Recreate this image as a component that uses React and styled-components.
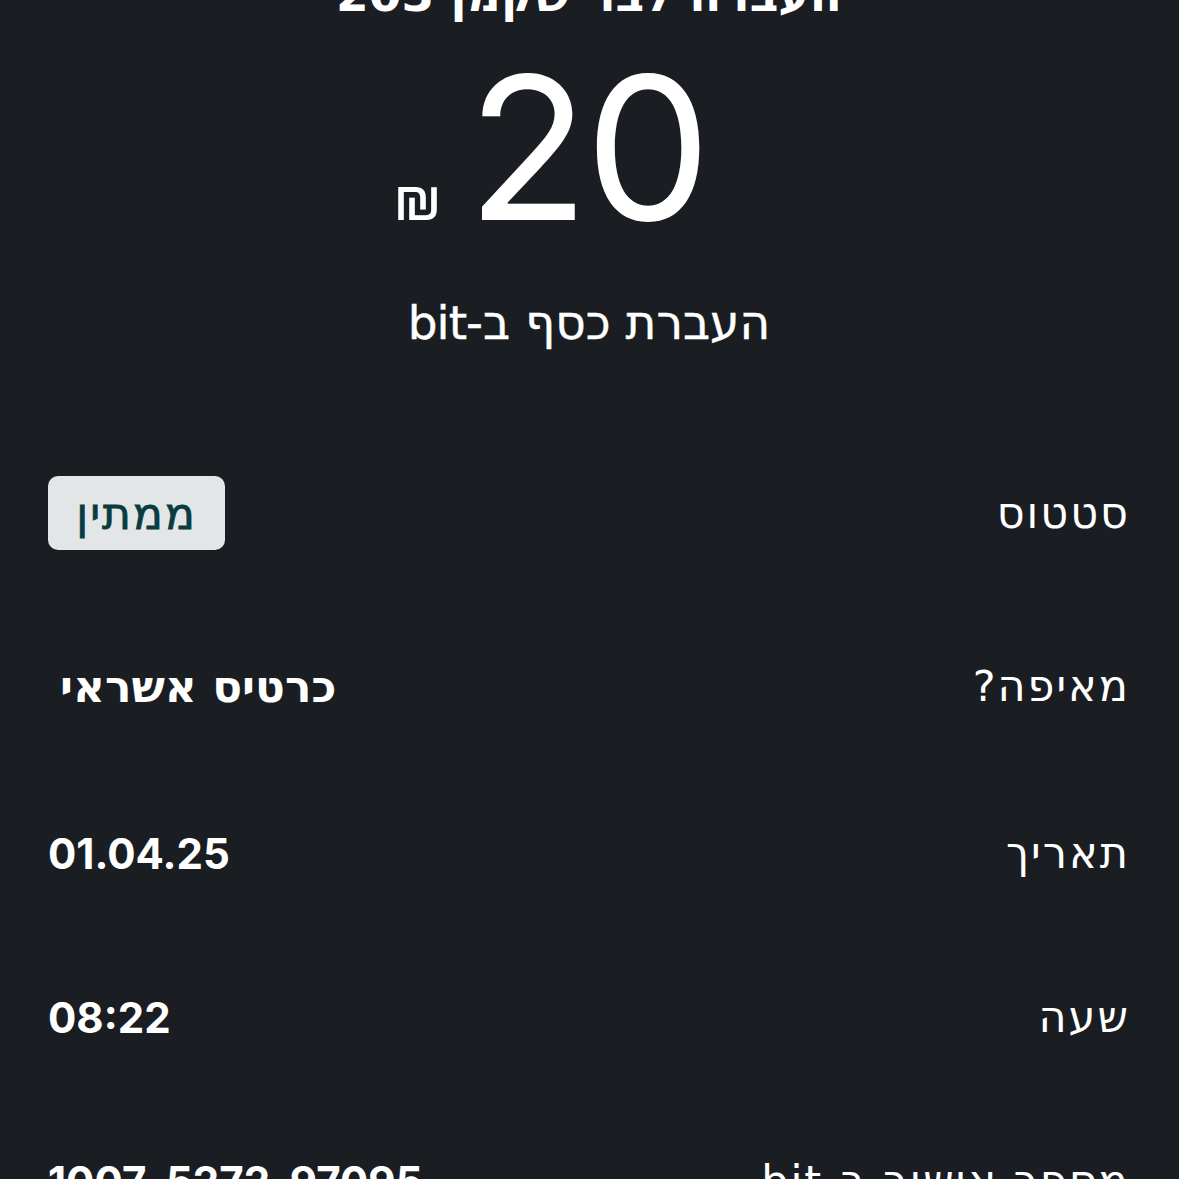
import React from "react";
import styled, { createGlobalStyle } from "styled-components";

const Global = createGlobalStyle`
  html, body { margin: 0; padding: 0; background: #1a1e22; }
  body { font-family: "DejaVu Sans", "Open Sans", sans-serif; color: #ffffff; }
`;

const Page = styled.div`
  direction: rtl;
  min-height: 1179px;
  background: #1a1e22;
  overflow: hidden;
  padding: 0 49px 0 48px;
  box-sizing: border-box;
`;

const Title = styled.h1`
  margin: -31px 0 0;
  text-align: center;
  font-size: 47px;
  font-weight: 700;
  line-height: 52px;
`;

const AmountRow = styled.div`
  direction: ltr;
  display: flex;
  justify-content: center;
  align-items: baseline;
  gap: 25px;
  margin-top: 26px;
  padding-right: 78px;
`;

const Shekel = styled.span`
  font-family: "Inter", "DejaVu Sans", sans-serif;
  font-size: 60px;
  font-weight: 400;
`;

const Amount = styled.span`
  font-family: "Inter", sans-serif;
  font-size: 200px;
  font-weight: 400;
  line-height: 200px;
  letter-spacing: -4px;
`;

const Subtitle = styled.div`
  text-align: center;
  font-size: 47px;
  margin-top: 46px;
  line-height: 60px;
  -webkit-text-stroke: 0.4px #ffffff;
`;

const Bit = styled.span`
  font-family: "DejaVu Sans", sans-serif;
  font-weight: 400;
  letter-spacing: -1px;
`;

const Rows = styled.div`
  display: flex;
  flex-direction: column;
  margin-top: 72px;
`;

const Row = styled.div`
  display: flex;
  justify-content: space-between;
  align-items: center;
  height: ${(p) => p.$h || 166}px;
`;

const Label = styled.span`
  font-size: 43px;
  letter-spacing: 2px;
  font-weight: 400;
`;

const Value = styled.span`
  font-family: ${(p) => (p.$num ? '"Inter", sans-serif' : '"DejaVu Sans", sans-serif')};
  font-size: ${(p) => (p.$num ? 42 : 44)}px;
  font-weight: 700;
  padding-left: ${(p) => p.$pl || 0}px;
`;

const Badge = styled.span`
  display: inline-flex;
  align-items: center;
  justify-content: center;
  width: 177px;
  height: 74px;
  border-radius: 10px;
  background: #e2e6e7;
  color: #0b3b3e;
  font-size: 44px;
  letter-spacing: 2px;
  font-weight: 400;
  -webkit-text-stroke: 0.8px #0b3b3e;
`;

export default function App() {
  return (
    <>
      <Global />
      <Page>
        <Title>העברה לבר שקמן 203</Title>
        <AmountRow>
          <Shekel>₪</Shekel>
          <Amount>20</Amount>
        </AmountRow>
        <Subtitle>
          העברת כסף ב-<Bit>bit</Bit>
        </Subtitle>
        <Rows>
          <Row $h={176}>
            <Label>סטטוס</Label>
            <Badge>ממתין</Badge>
          </Row>
          <Row $h={170}>
            <Label>מאיפה?</Label>
            <Value $pl={12}>כרטיס אשראי</Value>
          </Row>
          <Row $h={164}>
            <Label>תאריך</Label>
            <Value $num>01.04.25</Value>
          </Row>
          <Row $h={164}>
            <Label>שעה</Label>
            <Value $num>08:22</Value>
          </Row>
          <Row $h={164}>
            <Label>מספר אישור ב-bit</Label>
            <Value $num>1007-5272-97095</Value>
          </Row>
        </Rows>
      </Page>
    </>
  );
}
